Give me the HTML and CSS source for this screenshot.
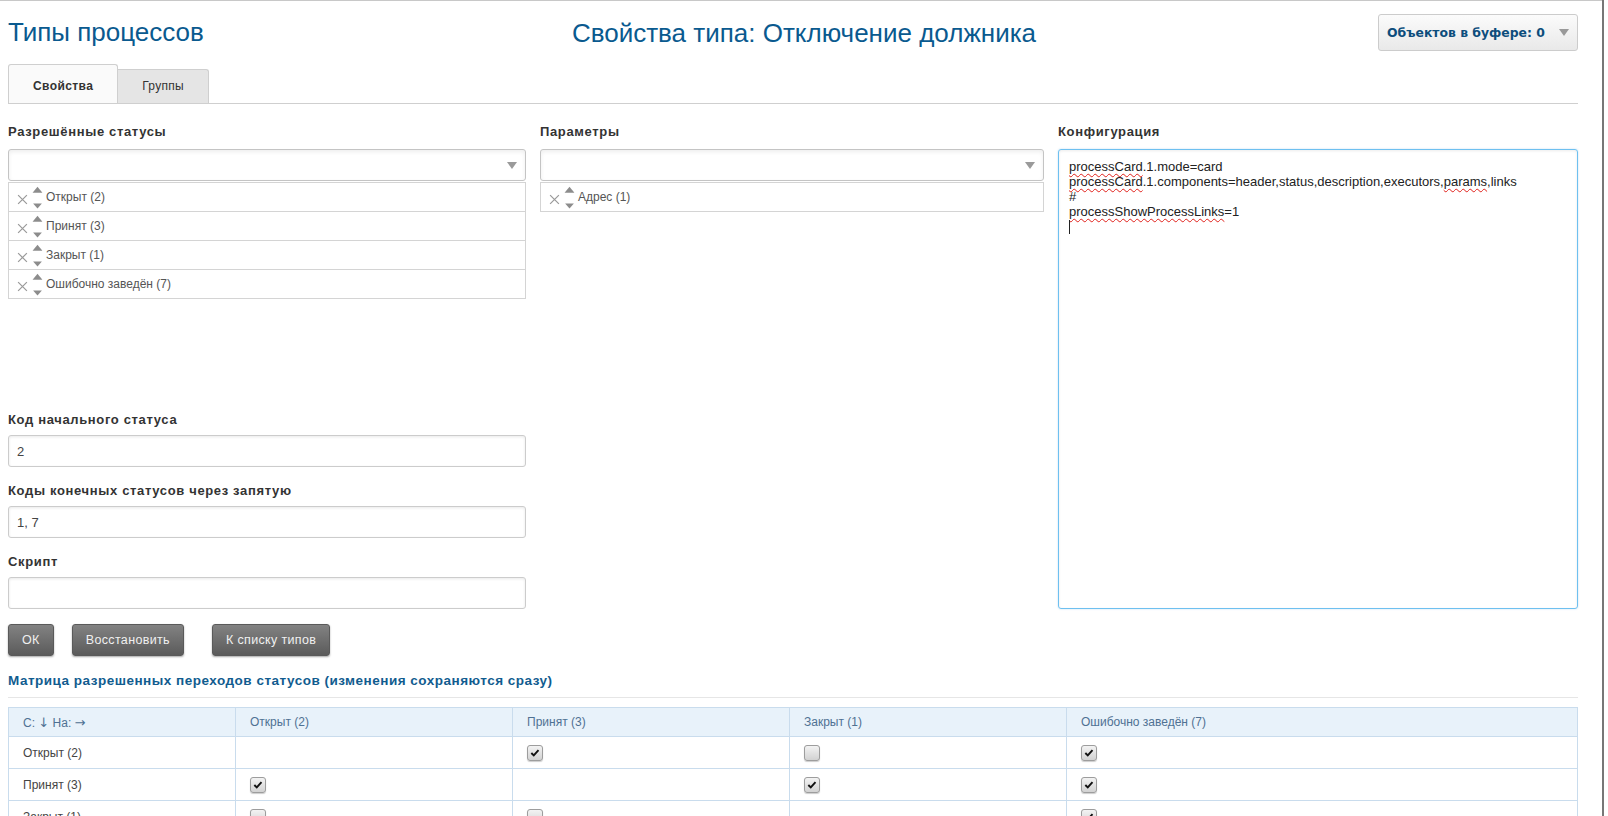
FILE: index.html
```html
<!DOCTYPE html>
<html lang="ru">
<head>
<meta charset="utf-8">
<title>Типы процессов</title>
<link rel="stylesheet" href="styles.css">
</head>
<body>
<div class="page">
  <header class="top">
    <h1 class="title">Типы процессов</h1>
    <h2 class="subtitle">Свойства типа: Отключение должника</h2>
    <div class="buffer-wrap">
      <div class="buffer"><span>Объектов в буфере: 0</span><span class="tri"></span></div>
    </div>
  </header>

  <nav class="tabs">
    <div class="tab active">Свойства</div>
    <div class="tab">Группы</div>
  </nav>

  <div class="cols">
    <div class="col">
      <div class="field">
        <div class="label">Разрешённые статусы</div>
        <div class="select"><span class="tri"></span></div>
        <ul class="items">
          <li><svg class="x" viewBox="0 0 10 10"><path d="M1 1L9 9M9 1L1 9"/></svg><svg class="ud" viewBox="0 0 10 22"><path d="M0.5 7L5 1.5L9.5 7Z"/><path d="M1 17L9 17L5 21.5Z"/></svg>Открыт (2)</li>
          <li><svg class="x" viewBox="0 0 10 10"><path d="M1 1L9 9M9 1L1 9"/></svg><svg class="ud" viewBox="0 0 10 22"><path d="M0.5 7L5 1.5L9.5 7Z"/><path d="M1 17L9 17L5 21.5Z"/></svg>Принят (3)</li>
          <li><svg class="x" viewBox="0 0 10 10"><path d="M1 1L9 9M9 1L1 9"/></svg><svg class="ud" viewBox="0 0 10 22"><path d="M0.5 7L5 1.5L9.5 7Z"/><path d="M1 17L9 17L5 21.5Z"/></svg>Закрыт (1)</li>
          <li><svg class="x" viewBox="0 0 10 10"><path d="M1 1L9 9M9 1L1 9"/></svg><svg class="ud" viewBox="0 0 10 22"><path d="M0.5 7L5 1.5L9.5 7Z"/><path d="M1 17L9 17L5 21.5Z"/></svg>Ошибочно заведён (7)</li>
        </ul>
      </div>
      <div class="field spaced">
        <div class="label">Код начального статуса</div>
        <div class="input">2</div>
      </div>
      <div class="field">
        <div class="label">Коды конечных статусов через запятую</div>
        <div class="input">1, 7</div>
      </div>
      <div class="field last">
        <div class="label">Скрипт</div>
        <div class="input"></div>
      </div>
    </div>

    <div class="col">
      <div class="field">
        <div class="label">Параметры</div>
        <div class="select"><span class="tri"></span></div>
        <ul class="items">
          <li><svg class="x" viewBox="0 0 10 10"><path d="M1 1L9 9M9 1L1 9"/></svg><svg class="ud" viewBox="0 0 10 22"><path d="M0.5 7L5 1.5L9.5 7Z"/><path d="M1 17L9 17L5 21.5Z"/></svg>Адрес (1)</li>
        </ul>
      </div>
    </div>

    <div class="col col-config">
      <div class="label">Конфигурация</div>
      <div class="config">
        <div class="line"><span class="sp">processCard</span>.1.mode=card</div>
        <div class="line"><span class="sp">processCard</span>.1.components=header,status,description,executors,<span class="sp">params</span>,links</div>
        <div class="line">#</div>
        <div class="line"><span class="sp">processShowProcessLinks</span>=1</div>
        <div class="line"><span class="caret"></span></div>
      </div>
    </div>
  </div>

  <div class="buttons">
    <button class="btn">ОК</button>
    <button class="btn">Восстановить</button>
    <button class="btn wide-gap">К списку типов</button>
  </div>

  <h3 class="matrix-title">Матрица разрешенных переходов статусов (изменения сохраняются сразу)</h3>

  <table class="matrix">
    <colgroup>
      <col class="c0"><col class="c1"><col class="c1"><col class="c1"><col>
    </colgroup>
    <thead>
      <tr><th>С: <span class="arr">↓</span> На: <span class="arr">→</span></th><th>Открыт (2)</th><th>Принят (3)</th><th>Закрыт (1)</th><th>Ошибочно заведён (7)</th></tr>
    </thead>
    <tbody>
      <tr><td>Открыт (2)</td><td></td><td><span class="cb on"></span></td><td><span class="cb"></span></td><td><span class="cb on"></span></td></tr>
      <tr><td>Принят (3)</td><td><span class="cb on"></span></td><td></td><td><span class="cb on"></span></td><td><span class="cb on"></span></td></tr>
      <tr><td>Закрыт (1)</td><td><span class="cb"></span></td><td><span class="cb"></span></td><td></td><td><span class="cb on"></span></td></tr>
      <tr><td>Ошибочно заведён (7)</td><td><span class="cb"></span></td><td><span class="cb"></span></td><td><span class="cb"></span></td><td></td></tr>
    </tbody>
  </table>
</div>
<div class="scroll-edge"></div>
</body>
</html>
```

FILE: styles.css
```css
* { box-sizing: border-box; }

html, body {
  margin: 0;
  padding: 0;
  height: 100%;
  overflow: hidden;
}

body {
  background: #fff;
  font-family: "Liberation Sans", Arial, sans-serif;
  font-size: 12px;
  color: #333;
  border-top: 1px solid #c8c8c8;
}

.page {
  width: 1570px;
  margin-left: 8px;
}

/* header */
.top {
  display: grid;
  grid-template-columns: 1fr auto 1fr;
  align-items: start;
  width: 1592px;
  padding-top: 13px;
  height: 50px;
}

.title {
  margin: 0;
  font-weight: normal;
  font-size: 26px;
  line-height: 37px;
  color: #0a5a8f;
}

.subtitle {
  margin: 0;
  font-weight: normal;
  font-size: 26px;
  line-height: 38px;
  color: #0a5a8f;
}

.buffer-wrap {
  display: flex;
  justify-content: flex-end;
  padding-right: 22px;
}

.buffer {
  width: 200px;
  height: 37px;
  display: flex;
  align-items: center;
  justify-content: space-between;
  padding: 0 8px 0 8px;
  border: 1px solid #ccc;
  border-radius: 3px;
  background: linear-gradient(#fbfbfb, #e9e9e9);
  font-family: "DejaVu Sans", sans-serif;
  font-weight: bold;
  font-size: 12.4px;
  color: #0d4d7c;
}

.buffer .tri {
  width: 0;
  height: 0;
  border-left: 5px solid transparent;
  border-right: 5px solid transparent;
  border-top: 7px solid #999;
}

/* tabs */
.tabs {
  display: flex;
  align-items: flex-end;
  margin-top: 13px;
  height: 40px;
  border-bottom: 1px solid #cfcfcf;
}

.tab {
  height: 34px;
  padding: 0 24px 2px;
  display: flex;
  align-items: center;
  background: #e5e5e5;
  border: 1px solid #cfcfcf;
  border-bottom: 0;
  border-left: 0;
  border-radius: 0 3px 0 0;
  color: #333;
  letter-spacing: 0.3px;
}

.tab.active {
  height: 39px;
  padding: 3px 24px 0;
  background: #fafafa;
  border-left: 1px solid #cfcfcf;
  border-radius: 3px 3px 0 0;
  font-weight: bold;
  letter-spacing: 0.4px;
}

/* columns */
.cols {
  display: grid;
  grid-template-columns: 518px 504px 520px;
  column-gap: 14px;
  padding-top: 20px;
}

.col {
  display: flex;
  flex-direction: column;
}

.label {
  font-size: 13px;
  line-height: 16px;
  font-weight: bold;
  color: #333;
  letter-spacing: 0.65px;
  margin-bottom: 9px;
}

.field.spaced {
  margin-top: 113px;
}

.field .input {
  height: 32px;
  margin-bottom: 16px;
  padding: 0 8px;
  display: flex;
  align-items: center;
  border: 1px solid #ccc;
  border-radius: 3px;
  box-shadow: inset 0 1px 3px rgba(0, 0, 0, 0.09);
  font-size: 13px;
  color: #444;
}

.field.last .input {
  margin-bottom: 0;
}

.field.spaced .label,
.field.spaced + .field .label,
.field.last .label {
  margin-bottom: 7px;
}

.select {
  height: 32px;
  display: flex;
  align-items: center;
  justify-content: flex-end;
  padding-right: 8px;
  border: 1px solid #c4c4c4;
  border-radius: 3px;
  background: #fff;
  box-shadow: inset 0 2px 4px rgba(0, 0, 0, 0.07);
}

.select .tri {
  width: 0;
  height: 0;
  border-left: 5px solid transparent;
  border-right: 5px solid transparent;
  border-top: 7px solid #9a9a9a;
}

.items {
  list-style: none;
  margin: 1px 0 0 0;
  padding: 0;
  border: 1px solid #d4d4d4;
}

.items li {
  height: 29px;
  display: flex;
  align-items: center;
  padding-left: 8px;
  border-bottom: 1px solid #d4d4d4;
  color: #555;
}

.items li:last-child {
  height: 28px;
  border-bottom: 0;
}

.items .x {
  width: 11px;
  height: 11px;
  margin-top: 4px;
  fill: none;
  stroke: #9a9a9a;
  stroke-width: 1.1;
}

.items .ud {
  width: 11px;
  height: 24px;
  margin-left: 4px;
  margin-right: 3px;
  fill: #8c8c8c;
}

/* config */
.col-config .label {
  margin-bottom: 9px;
}

.config {
  flex: 1;
  border: 1px solid #6ec0f0;
  border-radius: 3px;
  padding: 9px 10px;
  box-shadow: inset 0 1px 3px rgba(0, 0, 0, 0.08), 0 0 2px rgba(102, 175, 233, 0.4);
  font-size: 13px;
  line-height: 15px;
  color: #222;
}

.config .line {
  height: 15px;
  white-space: nowrap;
}

.config .sp {
  text-decoration: underline wavy #e0201a;
  text-decoration-thickness: 1px;
  text-underline-offset: 2px;
  text-decoration-skip-ink: none;
}

.config .caret {
  display: inline-block;
  width: 1px;
  height: 14px;
  background: #222;
  vertical-align: top;
  margin-top: 1px;
}

/* buttons */
.buttons {
  display: flex;
  margin-top: 15px;
  gap: 18px;
}

.btn {
  height: 32px;
  padding: 0 13px;
  border: 1px solid #5a5a5a;
  border-radius: 3px;
  background: linear-gradient(#828282, #5b5b5b);
  box-shadow: 0 1px 2px rgba(0, 0, 0, 0.35);
  color: #f0f0f0;
  font-family: "Liberation Sans", Arial, sans-serif;
  font-size: 12.5px;
  letter-spacing: 0.35px;
}

.btn.wide-gap {
  margin-left: 10px;
}

/* matrix */
.matrix-title {
  margin: 17px 0 0 0;
  padding-bottom: 8px;
  border-bottom: 1px solid #e6e6e6;
  font-size: 13.5px;
  line-height: 16px;
  letter-spacing: 0.5px;
  color: #115c8f;
}

.matrix {
  margin-top: 9px;
  width: 1570px;
  border-collapse: collapse;
  table-layout: fixed;
}

.matrix .c0 { width: 227px; }
.matrix .c1 { width: 277px; }

.matrix th,
.matrix td {
  border: 1px solid #c9dced;
  padding: 0 14px;
  text-align: left;
  font-weight: normal;
  white-space: nowrap;
}

.matrix th {
  height: 29px;
  background: #e8f2fa;
  color: #4f7193;
}

.matrix th .arr {
  font-family: "DejaVu Sans", sans-serif;
  font-size: 13px;
}

.matrix td {
  height: 32px;
  color: #444;
}

.cb {
  display: inline-block;
  width: 16px;
  height: 16px;
  vertical-align: middle;
  border: 1px solid #9d9d9d;
  border-radius: 3px;
  background: linear-gradient(#f3f3f3, #d2d2d2);
  box-shadow: 0 1px 1px rgba(0, 0, 0, 0.2);
}

.cb.on {
  background-image: url("data:image/svg+xml,%3Csvg xmlns='http://www.w3.org/2000/svg' viewBox='0 0 16 16'%3E%3Cpath d='M3.8 8L6.6 10.8L12 4.6' fill='none' stroke='%23111' stroke-width='2.2'/%3E%3C/svg%3E"), linear-gradient(#f3f3f3, #d2d2d2);
}

/* right window edge */
.scroll-edge {
  position: fixed;
  top: 0;
  right: 0;
  width: 6px;
  height: 100%;
  border-left: 2px solid #777;
  background: #fff;
}
```
